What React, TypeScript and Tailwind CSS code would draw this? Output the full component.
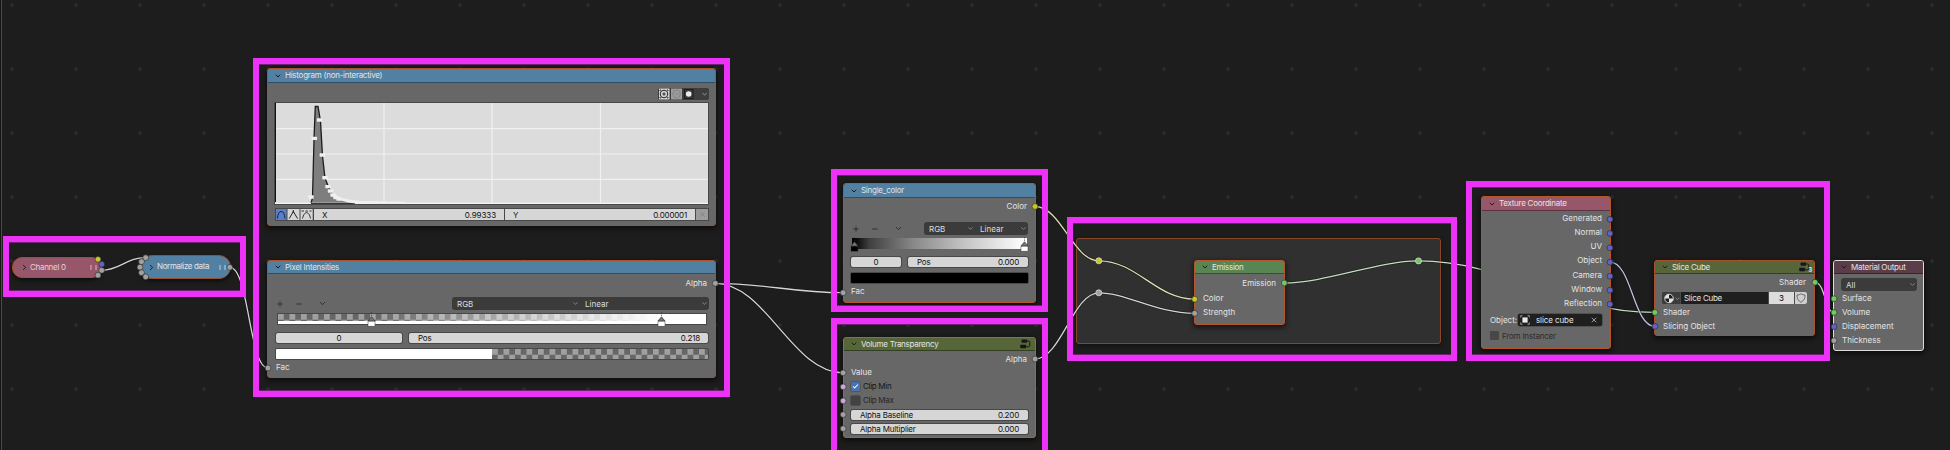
import React from "react";
import { ChevronDown, ChevronRight, Minus, Plus, X, Check } from "lucide-react";

type Kids = { children?: React.ReactNode; className?: string };

const GREY = "#a1a1a1";
const YELLOW = "#c7c729";
const BLUE = "#6363c7";
const GREEN = "#72c963";
const PINK = "#cca6d6";

const sockets: [number, number, string][] = [
  [98, 259.3, YELLOW], [101.7, 264.2, BLUE], [101.7, 270.3, GREY], [98, 275.2, GREY],
  [145.7, 257.7, GREY], [141.5, 261.7, GREY], [140, 267.2, GREY], [141.5, 272.7, GREY], [145.7, 276.8, GREY],
  [229.8, 267.3, GREY],
  [715.3, 283.3, GREY], [268, 368, GREY],
  [1035, 206.5, YELLOW], [843.2, 292.7, GREY],
  [1035, 359, GREY], [843.2, 372.8, GREY], [843.2, 386.8, PINK], [843.2, 400.8, PINK], [843.2, 414.6, GREY], [843.2, 428.6, GREY],
  [1284.3, 283, GREEN], [1194.7, 299.2, YELLOW], [1194.7, 313.3, GREY],
  [1610, 219.3, BLUE], [1610, 233.5, BLUE], [1610, 247.8, BLUE], [1610, 262.2, BLUE], [1610, 276.2, BLUE], [1610, 290.2, BLUE], [1610, 304.2, BLUE],
  [1815, 282.3, GREEN], [1655, 312.4, GREEN], [1655, 326.4, BLUE],
  [1834, 298.7, GREEN], [1834, 312.5, GREEN], [1834, 326.7, BLUE], [1834, 340.6, GREY],
];

const reroutes: [number, number, string][] = [
  [1098.8, 260.8, YELLOW], [1098.8, 292.8, GREY], [1418.5, 260.9, GREEN],
];

const wires: [string, string][] = [
  ["M101.7 270.3C120 270.3 126 257.7 145.7 257.7", "#d4d4d4"],
  ["M229.8 267.3C249 267.3 249 368 268 368", "#d4d4d4"],
  ["M715.3 283.3C766 283.3 792 292.7 843.2 292.7", "#d4d4d4"],
  ["M715.3 283.3C766 283.3 792 372.8 843.2 372.8", "#d4d4d4"],
  ["M1035 206.5C1061 206.5 1073 260.8 1098.8 260.8", "#dedeb0"],
  ["M1035 359C1061 359 1073 292.8 1098.8 292.8", "#d4d4d4"],
  ["M1098.8 260.8C1137 260.8 1156 299.2 1194.7 299.2", "#dedeb0"],
  ["M1098.8 292.8C1127 292.8 1156 313.3 1194.7 313.3", "#d4d4d4"],
  ["M1284.3 283C1325 283 1378 260.9 1418.5 260.9", "#c4dfc0"],
  ["M1418.5 260.9C1506 260.9 1560 312.4 1655 312.4", "#c4dfc0"],
  ["M1610 262.2C1632 262.2 1633 326.4 1655 326.4", "#c0c0df"],
  ["M1815 282.3C1825 282.3 1825 312.5 1834 312.5", "#c4dfc0"],
];

function Wires() {
  return (
    <svg className="absolute inset-0" width="1950" height="450" fill="none">
      {wires.map(([d, c]) => (
        <g key={d}>
          <path d={d} stroke="#111" strokeOpacity="0.6" strokeWidth="2.6" />
          <path d={d} stroke={c} strokeWidth="1.3" />
        </g>
      ))}
    </svg>
  );
}

function Sockets() {
  return (
    <svg className="absolute inset-0" width="1950" height="450">
      {sockets.map(([x, y, c]) => (
        <circle key={`${x}-${y}`} cx={x} cy={y} r="2.9" fill={c} stroke="#262626" strokeWidth="0.6" />
      ))}
      {reroutes.map(([x, y, c]) => (
        <circle key={`${x}-${y}`} cx={x} cy={y} r="3" fill={c} stroke="#d8d8d0" strokeWidth="0.8" />
      ))}
    </svg>
  );
}

function Node({ className = "", children }: Kids) {
  return (
    <section
      className={`absolute flex flex-col overflow-hidden rounded-[3px] border bg-[#676767] shadow-[0_2px_5px_1px_rgba(0,0,0,0.55)] ${className}`}
    >
      {children}
    </section>
  );
}

function Header({ className = "", title, icon }: { className?: string; title: string; icon?: React.ReactNode }) {
  return (
    <header className={`flex shrink-0 items-center border-b border-black/40 pr-[4px] pl-[6px] text-[#e4e4e4] ${className}`}>
      <ChevronDown className="mr-[3px] size-[8px] text-[#1d1d1d]" strokeWidth={3} />
      <span className="-mt-px flex-1 leading-none tracking-[-0.26px]">{title}</span>
      {icon}
    </header>
  );
}

function Row({ className = "", children }: Kids) {
  return <div className={`flex shrink-0 items-center leading-none ${className}`}>{children}</div>;
}

function Field({ className = "", children }: Kids) {
  return (
    <div className={`flex items-center rounded-[2px] bg-[#d6d6d6] leading-none tracking-[-0.2px] text-[#111] shadow-[0_0_0_1px_#484848] ${className}`}>
      {children}
    </div>
  );
}

function Select({ className = "", label }: { className?: string; label: string }) {
  return (
    <div className={`flex h-full items-center justify-between pr-[1px] pl-[5px] leading-none text-[#dedede] ${className}`}>
      <span>{label}</span>
      <ChevronDown className="size-[7px] text-[#a0a0a0]" strokeWidth={2.5} />
    </div>
  );
}

function RampTools() {
  return (
    <div className="flex w-[52px] items-center text-[#2b2b2b]">
      <Plus className="size-[8px]" strokeWidth={2.6} />
      <Minus className="ml-[11px] size-[8px]" strokeWidth={2.6} />
      <ChevronDown className="ml-[15px] size-[9px]" strokeWidth={2.6} />
    </div>
  );
}

function Handle({ className = "", fill }: { className?: string; fill: string }) {
  return (
    <svg className={`absolute ${className}`} width="9" height="15" viewBox="0 0 9 15">
      <path d="M4.5 0V6" stroke="#333" strokeWidth="1" strokeDasharray="1.5 1" strokeOpacity="0.6" />
      <path d="M4.5 4.8L8 9H1Z" fill="#777" stroke="#333" strokeWidth="0.7" />
      <rect x="1" y="9.2" width="7" height="5" fill={fill} stroke="#3a3a3a" strokeWidth="0.5" />
    </svg>
  );
}

function NodeTreeIcon() {
  return (
    <svg width="11" height="10" viewBox="0 0 11 10" fill="none">
      <rect x="1.5" y="0.6" width="5.5" height="3.2" rx="0.8" fill="#161616" />
      <rect x="0.2" y="5.8" width="6" height="3.4" rx="0.8" fill="#161616" />
      <path d="M7 2H8.5Q9.8 2 9.8 3.4V6.2Q9.8 7.8 8.4 7.8H6.5" stroke="#161616" strokeWidth="1" />
    </svg>
  );
}

const checker =
  "bg-[repeating-conic-gradient(#666_0_25%,#a0a0a0_0_50%)] bg-[length:11.5px_11.5px]";

function Channel() {
  return (
    <div className="absolute top-[257px] left-[12px] flex h-[21px] w-[90px] items-center rounded-[10px] border border-[#b5481f] bg-[#98566a] pl-[7px] text-[#e0d4d8] shadow-[0_2px_4px_rgba(0,0,0,0.6)]">
      <ChevronRight className="mr-[1px] size-[9px] text-[#1d1d1d]" strokeWidth={2.6} />
      <span className="-mt-[2px] flex-1 leading-none tracking-[-0.3px]">Channel 0</span>
      <span className="mr-[3px] h-[5px] w-[2px] bg-[#b98594]" />
      <span className="mr-[4px] h-[5px] w-[2px] bg-[#b98594]" />
    </div>
  );
}

function Normalize() {
  return (
    <div className="absolute top-[255px] left-[140px] flex h-[24px] w-[91px] items-center rounded-[12px] border border-[#95512e] bg-[#5180a2] pl-[6px] text-[#e0e6ea] shadow-[0_2px_4px_rgba(0,0,0,0.6)]">
      <ChevronRight className="mr-[1px] size-[9px] text-[#1d1d1d]" strokeWidth={2.6} />
      <span className="-mt-[2px] flex-1 leading-none tracking-[-0.35px]">Normalize data</span>
      <span className="mr-[3px] h-[5px] w-[2px] bg-[#8aa9c0]" />
      <span className="mr-[4px] h-[5px] w-[2px] bg-[#8aa9c0]" />
    </div>
  );
}

const curve = "M36 100L37.5 95L39 36L40.3 3.5H43L45.5 18L47.5 53L50 75L53.5 84L56 89L60 94L66 97L78 99.5L100 100.6";
const marks: [number, number][] = [
  [36, 94], [39.3, 35.4], [44.5, 17], [47.3, 52], [50, 74.7], [53, 83.6], [55.5, 88], [58, 92], [61, 94.5], [64, 96],
];

function Plot() {
  return (
    <svg className="shrink-0 bg-[#dcdcdc] shadow-[0_0_0_1px_#484848]" width="433" height="101" viewBox="0 0 433 101">
      <path d="M0 25.7H434M0 51H434M0 76.3H434M109 0V101M217 0V101M325.5 0V101" stroke="#f0f0f0" strokeWidth="1.2" />
      <path d={`${curve}L36 101Z`} fill="#7e7e7e" />
      <path d={curve} fill="none" stroke="#1c1c1c" strokeWidth="1.3" />
      <path d="M0 100.5H434" stroke="#f4f4f4" strokeWidth="1.6" />
      <path d="M36 100.5H80" stroke="#333" strokeWidth="1" />
      <path d="M57 91Q64 98 84 99.2L130 100.2" fill="none" stroke="#efefef" strokeWidth="3" />
      {marks.map(([x, y]) => (
        <rect key={x} x={x - 2.7} y={y - 1.7} width="5.4" height="3.4" rx="0.6" fill="#f0f0f0" />
      ))}
      <path d="M0.5 0V99" stroke="#111" strokeWidth="1" />
    </svg>
  );
}

function Histogram() {
  return (
    <Node className="top-[68px] left-[267px] h-[158px] w-[449px] border-[#a8512a]">
      <Header className="h-[14px] bg-[#5180a2]" title="Histogram (non-interactive)" />
      <Row className="mt-[5px] h-[12px] justify-end pr-[6px]">
        <div className="flex h-[12px] w-[51px] items-center overflow-hidden rounded-[2px] bg-[#3d3d3d]">
          <svg width="51" height="12" viewBox="0 0 51 12" fill="none">
            <rect x="1" y="0.5" width="10.5" height="11" fill="#dadada" />
            <circle cx="6" cy="6" r="3.8" stroke="#222" strokeWidth="1" />
            <path d="M4.2 6H7.8M6 4.2V7.8M2 3V2H3M9 2H10V3M2 9V10H3M10 9V10H9" stroke="#222" strokeWidth="0.9" />
            <rect x="13" y="0.5" width="11" height="11" fill="#9c9c9c" />
            <circle cx="18.5" cy="6" r="3.8" stroke="#868686" strokeWidth="1" />
            <path d="M16.7 6H20.3" stroke="#868686" strokeWidth="0.9" />
            <rect x="26.5" y="1.5" width="8.5" height="9" stroke="#1d1d1d" strokeWidth="1" />
            <circle cx="30.7" cy="6" r="2.8" fill="#ececec" />
            <path d="M44.5 5L46.7 7.2L48.9 5" stroke="#9a9a9a" strokeWidth="0.9" />
          </svg>
        </div>
      </Row>
      <div className="mt-[3px] ml-[7px] flex">
        <Plot />
      </div>
      <div className="mt-[5px] ml-[8px] flex h-[11px] w-[432px] gap-px bg-[#484848] leading-none text-[#111] shadow-[0_0_0_1px_#484848]">
        <svg className="shrink-0" width="37" height="11" viewBox="0 0 37 11" fill="none">
          <rect width="10.5" height="11" fill="#5a7fc6" />
          <path d="M1.5 9.5Q2 2.5 5.2 2.5T9 9.5" stroke="#16233f" strokeWidth="1" />
          <rect x="11.5" width="12" height="11" fill="#d6d6d6" />
          <path d="M13.3 9.5L17.3 2.5L21.5 9.5M17.3 1V4" stroke="#222" strokeWidth="1" />
          <rect x="24.5" width="12.2" height="11" fill="#d6d6d6" />
          <path d="M26.5 9.5C27.5 5.5 29 3.6 30.6 3.6S33.8 5.5 34.5 9.5M25.5 2H28M29.5 2H32M33.5 2H35.5" stroke="#222" strokeWidth="0.9" />
        </svg>
        <div className="flex w-[190px] shrink-0 items-center justify-between bg-[#d6d6d6] pr-[8px] pl-[8px]">
          <span>X</span>
          <span className="tracking-[-0.1px]">0.99333</span>
        </div>
        <div className="flex w-[190px] shrink-0 items-center justify-between bg-[#d6d6d6] pr-[8px] pl-[8px]">
          <span>Y</span>
          <span className="tracking-[-0.2px]">0.000001</span>
        </div>
        <div className="flex flex-1 items-center justify-center bg-[#9c9c9c]">
          <X className="size-[7px] text-[#777]" strokeWidth={2.4} />
        </div>
      </div>
    </Node>
  );
}

function PixelIntensities() {
  return (
    <Node className="top-[260px] left-[267px] h-[118px] w-[449px] border-[#a8512a]">
      <Header className="h-[13px] bg-[#5180a2]" title="Pixel Intensities" />
      <Row className="mt-[3px] h-[12px] justify-end pr-[8px] text-[#e4e4e4]">Alpha</Row>
      <Row className="mt-[8px] h-[13px] justify-between pr-[6px] pl-[8px]">
        <RampTools />
        <div className="flex h-[13px] w-[257px] rounded-[3px] bg-[#3b3b3b]">
          <Select className="w-[128px]" label="RGB" />
          <Select className="w-[129px]" label="Linear" />
        </div>
      </Row>
      <div className="relative mt-[4px] ml-[10px] flex h-[10px] w-[428px] flex-col shadow-[0_0_0_1px_#484848]">
        <div className={`h-[7px] ${checker}`}>
          <div className="h-full bg-[linear-gradient(to_right,transparent_21.7%,white_89.7%)]" />
        </div>
        <div className="h-[3px] bg-white" />
        <Handle className="-top-[2px] left-[88.5px]" fill="#fff" />
        <Handle className="-top-[2px] left-[379px]" fill="#fff" />
      </div>
      <Row className="mt-[9px] h-[10px] gap-[7px] pl-[8px]">
        <Field className="h-[10px] w-[126px] justify-center">0</Field>
        <Field className="h-[10px] w-[299px] justify-between pr-[8px] pl-[9px]">
          <span>Pos</span>
          <span>0.218</span>
        </Field>
      </Row>
      <div className="mt-[6px] ml-[8px] flex h-[10px] w-[432px] overflow-hidden rounded-[1px] shadow-[0_0_0_1px_#484848]">
        <div className="w-[216px] bg-white" />
        <div className={`flex-1 ${checker}`} />
      </div>
      <Row className="mt-[2px] h-[12px] pl-[8px] text-[#e4e4e4]">Fac</Row>
    </Node>
  );
}

function SingleColor() {
  return (
    <Node className="top-[183px] left-[843px] h-[120px] w-[193px] border-[#b5562a]">
      <Header className="h-[14px] bg-[#5180a2]" title="Single_color" />
      <Row className="mt-[2px] h-[12px] justify-end pr-[8px] text-[#e4e4e4]">Color</Row>
      <Row className="mt-[10px] h-[13px] justify-between pr-[7px] pl-[8px]">
        <RampTools />
        <div className="flex h-[13px] w-[104px] rounded-[3px] bg-[#3b3b3b]">
          <Select className="w-[51px]" label="RGB" />
          <Select className="w-[53px]" label="Linear" />
        </div>
      </Row>
      <div className="relative mt-[3px] ml-[8px] h-[11px] w-[175px] bg-[linear-gradient(to_right,#000_1%,#404040_10%,#888_35%,#c0c0c0_62%,#fff_99%)]">
        <Handle className="-top-[1px] -left-[2px]" fill="#000" />
        <Handle className="-top-[1px] left-[168px]" fill="#fff" />
      </div>
      <Row className="mt-[8px] h-[10px] gap-[7px] pl-[7px]">
        <Field className="h-[10px] w-[50px] justify-center">0</Field>
        <Field className="h-[10px] w-[120px] justify-between pr-[9px] pl-[9px]">
          <span>Pos</span>
          <span>0.000</span>
        </Field>
      </Row>
      <div className="mt-[6px] ml-[7px] h-[10px] w-[177px] rounded-[1px] bg-black shadow-[0_0_0_1px_#484848]" />
      <Row className="mt-[2px] h-[12px] pl-[7px] text-[#e4e4e4]">Fac</Row>
    </Node>
  );
}

function VolumeTransparency() {
  return (
    <Node className="top-[337px] left-[843px] h-[101px] w-[193px] border-[#b5622a]">
      <Header className="h-[13px] bg-[#566639]" title="Volume Transparency" icon={<NodeTreeIcon />} />
      <Row className="mt-[2px] h-[12px] justify-end pr-[8px] text-[#e4e4e4]">Alpha</Row>
      <Row className="h-[14px] pl-[7px] text-[#e4e4e4]">Value</Row>
      <Row className="h-[14px] gap-[3px] pl-[7px] tracking-[-0.3px] text-[#151515]">
        <span className="flex size-[9px] items-center justify-center rounded-[1px] bg-[#4772b3] shadow-[0_0_0_0.5px_#444]">
          <Check className="size-[7px] text-white" strokeWidth={3.6} />
        </span>
        Clip Min
      </Row>
      <Row className="h-[14px] gap-[3px] pl-[7px] tracking-[-0.3px] text-[#262626]">
        <span className="size-[9px] rounded-[1px] bg-[#434343] shadow-[0_0_0_0.5px_#383838]" />
        Clip Max
      </Row>
      <Field className="mt-[3px] ml-[7px] h-[10px] w-[177px] shrink-0 justify-between pr-[9px] pl-[9px]">
        <span>Alpha Baseline</span>
        <span>0.200</span>
      </Field>
      <Field className="mt-[4px] ml-[7px] h-[10px] w-[177px] shrink-0 justify-between pr-[9px] pl-[9px]">
        <span>Alpha Multiplier</span>
        <span>0.000</span>
      </Field>
    </Node>
  );
}

function Emission() {
  return (
    <Node className="top-[260px] left-[1194px] h-[65px] w-[91px] border-[#b5552a]">
      <Header className="h-[13px] bg-[#598552]" title="Emission" />
      <Row className="mt-[2px] h-[13px] justify-end pr-[8px] text-[#e4e4e4]">Emission</Row>
      <Row className="mt-[2px] h-[14px] pl-[8px] text-[#e4e4e4]">Color</Row>
      <Row className="h-[14px] pl-[8px] text-[#e4e4e4]">Strength</Row>
    </Node>
  );
}

const outputs = ["Generated", "Normal", "UV", "Object", "Camera", "Window", "Reflection"];

function TextureCoordinate() {
  return (
    <Node className="top-[196px] left-[1481px] h-[153px] w-[130px] border-[#b5552a]">
      <Header className="h-[14px] bg-[#98566a]" title="Texture Coordinate" />
      <div className="flex flex-col text-[#e4e4e4]">
        {outputs.map((name) => (
          <Row key={name} className="h-[14.15px] justify-end pr-[8px]">{name}</Row>
        ))}
      </div>
      <Row className="mt-[4px] h-[13px] justify-between pr-[8px] pl-[8px] text-[#e4e4e4]">
        <span className="-mt-px">Object:</span>
        <div className="flex h-[12px] w-[84px] items-center rounded-[2px] bg-[#1f1f1f] pr-[4px] pl-[2px] shadow-[0_0_0_0.5px_#3a3a3a]">
          <svg className="mr-[6px]" width="10" height="10" viewBox="0 0 10 10" fill="none">
            <rect x="2.4" y="2.4" width="5.2" height="5.2" fill="#e8e8e8" />
            <path d="M0.7 2.5V0.7H2.5M7.5 0.7H9.3V2.5M9.3 7.5V9.3H7.5M2.5 9.3H0.7V7.5" stroke="#bbb" strokeWidth="0.8" />
          </svg>
          <span className="-mt-px flex-1 tracking-[-0.1px]">slice cube</span>
          <X className="size-[8px] text-[#c8c8c8]" strokeWidth={2.2} />
        </div>
      </Row>
      <Row className="mt-[3px] h-[12px] gap-[3px] pl-[8px] tracking-[-0.2px] text-[#2c2c2c]">
        <span className="size-[9px] rounded-[1px] bg-[#474747]" />
        From Instancer
      </Row>
    </Node>
  );
}

function SliceCube() {
  return (
    <Node className="top-[260px] left-[1654px] h-[76px] w-[161px] border-[#a8512a]">
      <Header
        className="h-[13px] bg-[#566639]"
        title="Slice Cube"
        icon={
          <span className="-mr-[2px] flex items-end">
            <NodeTreeIcon />
            <span className="-ml-[2px] text-[6px] leading-[5px] font-bold">3</span>
          </span>
        }
      />
      <Row className="mt-[1px] h-[13px] justify-end pr-[8px] text-[#e4e4e4]">Shader</Row>
      <div className="mt-[4px] ml-[7px] flex h-[12px] w-[145px] shrink-0 gap-px overflow-hidden rounded-[2px] bg-[#4a4a4a] leading-none">
        <div className="flex w-[18px] items-center bg-[#3b3b3b] pl-[1px]">
          <svg width="17" height="11" viewBox="0 0 17 11" fill="none">
            <circle cx="6" cy="5.5" r="4.3" fill="#1c1c1c" stroke="#e4e4e4" strokeWidth="0.9" />
            <path d="M6 5.5V1.2A4.3 4.3 0 0 0 1.7 5.5ZM6 5.5H10.3A4.3 4.3 0 0 1 6 9.8Z" fill="#e4e4e4" />
            <path d="M12.5 4.8L14.4 6.6L16.2 4.8" stroke="#9a9a9a" strokeWidth="0.8" />
          </svg>
        </div>
        <div className="flex w-[87px] items-center bg-[#1f1f1f] pl-[3px] tracking-[-0.26px] text-[#e4e4e4]">Slice Cube</div>
        <div className="flex w-[25px] items-center justify-center bg-[#dcdcdc] text-black">3</div>
        <div className="flex flex-1 items-center justify-center bg-[#cfcfcf]">
          <svg width="10" height="10" viewBox="0 0 10 10" fill="none">
            <path d="M5 0.8Q6.5 2 9 2Q9.2 7 5 9.3Q0.8 7 1 2Q3.5 2 5 0.8Z" stroke="#555" strokeWidth="0.8" />
          </svg>
        </div>
      </div>
      <Row className="mt-[1px] h-[14px] pl-[8px] text-[#e4e4e4]">Shader</Row>
      <Row className="h-[14px] pl-[8px] text-[#e4e4e4]">Slicing Object</Row>
    </Node>
  );
}

function MaterialOutput() {
  return (
    <Node className="top-[260px] left-[1833px] h-[91px] w-[91px] border-[#dcdcdc]">
      <Header className="h-[13px] bg-[#5b3c49]" title="Material Output" />
      <div className="mt-[4px] ml-[7px] flex h-[13px] w-[76px] shrink-0 rounded-[3px] bg-[#3b3b3b]">
        <Select className="w-full" label="All" />
      </div>
      <Row className="h-[14px] pl-[8px] text-[#e4e4e4]">Surface</Row>
      <Row className="h-[14px] pl-[8px] text-[#e4e4e4]">Volume</Row>
      <Row className="h-[14px] pl-[8px] text-[#e4e4e4]">Displacement</Row>
      <Row className="h-[14px] pl-[8px] text-[#e4e4e4]">Thickness</Row>
    </Node>
  );
}

function Outline({ className = "" }: { className?: string }) {
  return (
    <div
      className={`absolute border-[6px] border-[#eb32f6] shadow-[inset_0_1px_0_#6d2272,inset_0_-1px_0_#6d2272] ${className}`}
    />
  );
}

export default function App() {
  return (
    <main className="relative h-[450px] w-[1950px] overflow-hidden bg-[#1d1d1d] bg-[radial-gradient(circle_at_12px_5px,#2b2b2b_1.5px,transparent_2.2px)] bg-[length:64px_64px] font-['Inter',sans-serif] text-[8px]">
      <div className="absolute top-0 left-0 h-[450px] w-[2px] border-r border-[#484848] bg-[#151515]" />
      <div className="absolute top-[238px] left-[1076px] h-[106px] w-[365px] rounded-[3px] border border-[#8a4526] bg-[#303030] shadow-[0_2px_4px_rgba(0,0,0,0.4)]" />
      <Wires />
      <Channel />
      <Normalize />
      <Histogram />
      <PixelIntensities />
      <SingleColor />
      <VolumeTransparency />
      <Emission />
      <TextureCoordinate />
      <SliceCube />
      <MaterialOutput />
      <Sockets />
      <Outline className="top-[236px] left-[3px] h-[61px] w-[243px]" />
      <Outline className="top-[58px] left-[253px] h-[339px] w-[477px]" />
      <Outline className="top-[169px] left-[831px] h-[143px] w-[217px]" />
      <Outline className="top-[318px] left-[831px] h-[145px] w-[217px]" />
      <Outline className="top-[217px] left-[1067px] h-[144px] w-[390px]" />
      <Outline className="top-[181px] left-[1466px] h-[180px] w-[364px]" />
    </main>
  );
}
